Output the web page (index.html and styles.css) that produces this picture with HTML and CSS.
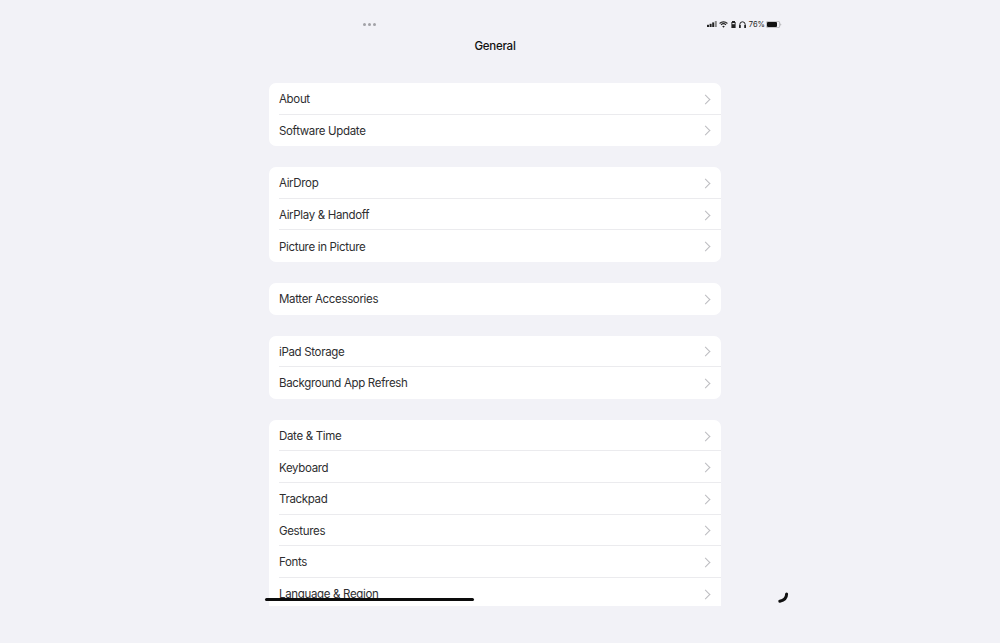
FILE: index.html
```html
<!DOCTYPE html>
<html lang="en">
<head>
    <meta charset="UTF-8">
    <meta name="viewport" content="width=device-width, initial-scale=1.0">
    <title>General</title>
    <link rel="stylesheet" href="styles.css">
</head>
<body>
    <div class="status-bar">
        <div class="dots"><span></span><span></span><span></span></div>
        <div class="status-icons">
            <svg class="signal" width="10" height="6" viewBox="0 0 10 6"><rect x="0" y="3.8" width="2" height="2.2" fill="#222"/><rect x="2.6" y="2.8" width="2" height="3.2" fill="#222"/><rect x="5.2" y="1.4" width="2" height="4.6" fill="#222"/><rect x="7.8" y="0" width="2" height="6" fill="#888"/></svg>
            <svg width="9" height="7" viewBox="0 0 9 7"><path d="M.6 2.5a5.6 5.6 0 0 1 7.8 0M2 3.9a3.6 3.6 0 0 1 5 0" fill="none" stroke="#222" stroke-width="1.1"/><path d="M4.5 6.8 3.2 5.3a1.9 1.9 0 0 1 2.6 0z" fill="#222"/></svg>
            <svg width="5" height="7" viewBox="0 0 5 7"><path d="M1 0h3v1h.6v6H.4V1H1z" fill="#222"/><rect x="1.3" y="2" width="2.4" height="1.2" fill="#f2f2f7"/></svg>
            <svg width="7" height="7" viewBox="0 0 7 7"><path d="M.8 5V3.5a2.7 2.7 0 0 1 5.4 0V5" fill="none" stroke="#222"/><rect x="0" y="4" width="1.8" height="3" rx=".6" fill="#222"/><rect x="5.2" y="4" width="1.8" height="3" rx=".6" fill="#222"/></svg>
            <span class="battery-pct">76%</span>
            <svg width="16" height="7" viewBox="0 0 16 7"><rect x=".3" y=".3" width="13.4" height="6.4" rx="1.6" fill="none" stroke="#999" stroke-width=".6"/><rect x="1" y="1" width="10" height="5" rx="1" fill="#111"/><path d="M14.5 2.4a1.2 1.2 0 0 1 0 2.2z" fill="#999"/></svg>
        </div>
    </div>

    <h1 class="title">General</h1>

    <div class="list">
        <div class="group">
            <div class="row">About<span class="chevron"></span></div>
            <div class="row">Software Update<span class="chevron"></span></div>
        </div>
        <div class="group">
            <div class="row">AirDrop<span class="chevron"></span></div>
            <div class="row">AirPlay &amp; Handoff<span class="chevron"></span></div>
            <div class="row">Picture in Picture<span class="chevron"></span></div>
        </div>
        <div class="group">
            <div class="row">Matter Accessories<span class="chevron"></span></div>
        </div>
        <div class="group">
            <div class="row">iPad Storage<span class="chevron"></span></div>
            <div class="row">Background App Refresh<span class="chevron"></span></div>
        </div>
        <div class="group">
            <div class="row">Date &amp; Time<span class="chevron"></span></div>
            <div class="row">Keyboard<span class="chevron"></span></div>
            <div class="row">Trackpad<span class="chevron"></span></div>
            <div class="row">Gestures<span class="chevron"></span></div>
            <div class="row">Fonts<span class="chevron"></span></div>
            <div class="row">Language &amp; Region<span class="chevron"></span></div>
        </div>
    </div>

    <div class="home-bar"></div>
    <svg class="spinner" width="12" height="12" viewBox="0 0 12 12"><path d="M9.6 2C9.6 5.6 7.6 8.2 2.8 9.2" fill="none" stroke="#111" stroke-width="3" stroke-linecap="round"/></svg>
</body>
</html>
```

FILE: styles.css
```css
body {
    font-family: 'Inter', 'Liberation Sans', sans-serif;
    background: #f2f2f7;
    margin: 0;
    height: 643px;
    overflow: hidden;
    position: relative;
    color: #1c1c1e;
}
.status-bar {
    display: flex;
    justify-content: space-between;
    align-items: center;
    height: 14px;
    padding: 17px 218px 0 363px;
}
.dots {
    display: flex;
    gap: 2px;
}
.dots span {
    width: 3px;
    height: 3px;
    border-radius: 50%;
    background: #a2a2a7;
}
.status-icons {
    display: flex;
    align-items: center;
    gap: 3px;
}
.signal {
    margin-right: -1px;
}
.battery-pct {
    font-size: 7.5px;
    color: #222;
    margin-right: -2px;
}
.title {
    margin: 0;
    width: 990px;
    text-align: center;
    font-size: 11.5px;
    font-weight: 500;
    letter-spacing: -0.25px;
    line-height: 20px;
    padding-top: 5px;
    color: #111;
}
.list {
    display: flex;
    flex-direction: column;
    gap: 21px;
    width: 452px;
    height: 523px;
    margin: 27px 0 0 269px;
    overflow: hidden;
}
.group {
    flex-shrink: 0;
    background: #fff;
    border-radius: 7px;
}
.group:last-child {
    border-radius: 7px 7px 0 0;
}
.row {
    position: relative;
    display: flex;
    justify-content: space-between;
    align-items: center;
    height: 31.6px;
    box-sizing: border-box;
    padding: 1px 10px 0;
    font-size: 11.5px;
    letter-spacing: -0.33px;
    color: #2e2e30;
}
.row + .row::before {
    content: "";
    position: absolute;
    top: -1px;
    left: 10px;
    right: 0;
    height: 1px;
    background: #ebebee;
}
.chevron {
    width: 6px;
    height: 6px;
    border-top: 1.6px solid #bcbcc0;
    border-right: 1.6px solid #bcbcc0;
    transform: rotate(45deg);
    margin-right: 2px;
}
.home-bar {
    position: absolute;
    left: 265px;
    top: 598px;
    width: 209px;
    height: 3px;
    border-radius: 2px;
    background: #0c0c0c;
}
.spinner {
    position: absolute;
    left: 777px;
    top: 592px;
}
```
